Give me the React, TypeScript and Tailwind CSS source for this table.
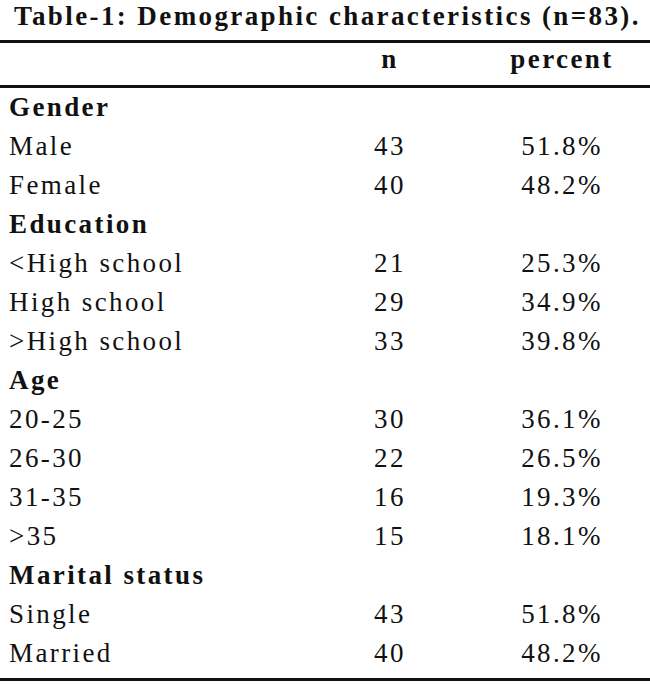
type Row = { label: string; n?: number; pct?: string; head?: boolean }

const rows: Row[] = [
  { label: 'Gender', head: true },
  { label: 'Male', n: 43, pct: '51.8%' },
  { label: 'Female', n: 40, pct: '48.2%' },
  { label: 'Education', head: true },
  { label: '<High school', n: 21, pct: '25.3%' },
  { label: 'High school', n: 29, pct: '34.9%' },
  { label: '>High school', n: 33, pct: '39.8%' },
  { label: 'Age', head: true },
  { label: '20-25', n: 30, pct: '36.1%' },
  { label: '26-30', n: 22, pct: '26.5%' },
  { label: '31-35', n: 16, pct: '19.3%' },
  { label: '>35', n: 15, pct: '18.1%' },
  { label: 'Marital status', head: true },
  { label: 'Single', n: 43, pct: '51.8%' },
  { label: 'Married', n: 40, pct: '48.2%' },
]

export default function App() {
  return (
    <div className="w-[650px] h-[698px] bg-white text-[#111] [font-family:'Liberation_Serif','Times_New_Roman',serif] text-[27px] tracking-[2.4px]">
      {/* заголовок таблицы */}
      <div className="pl-[14px] pb-[8px] leading-[32px] font-bold whitespace-nowrap">
        Table-1: Demographic characteristics (n=83).
      </div>

      <div className="border-t-[3px] border-[#111] grid grid-cols-[340px_100px_1fr] leading-[32px] pb-[10px] font-bold">
        <div />
        <div className="text-center">n</div>
        <div className="text-center pl-[34px]">percent</div>
      </div>

      <div className="border-t-[3px] border-[#111] pb-[5px]">
        {rows.map((r, i) => (
          <div key={i} className="grid grid-cols-[340px_100px_1fr] leading-[39px] h-[39px]">
            <div className={`pl-[9px] whitespace-nowrap ${r.head ? 'font-bold' : ''}`}>{r.label}</div>
            <div className="text-center">{r.n ?? ''}</div>
            <div className="text-center pl-[34px]">{r.pct ?? ''}</div>
          </div>
        ))}
      </div>
      <div className="border-t-[3px] border-[#111]" />
    </div>
  )
}
